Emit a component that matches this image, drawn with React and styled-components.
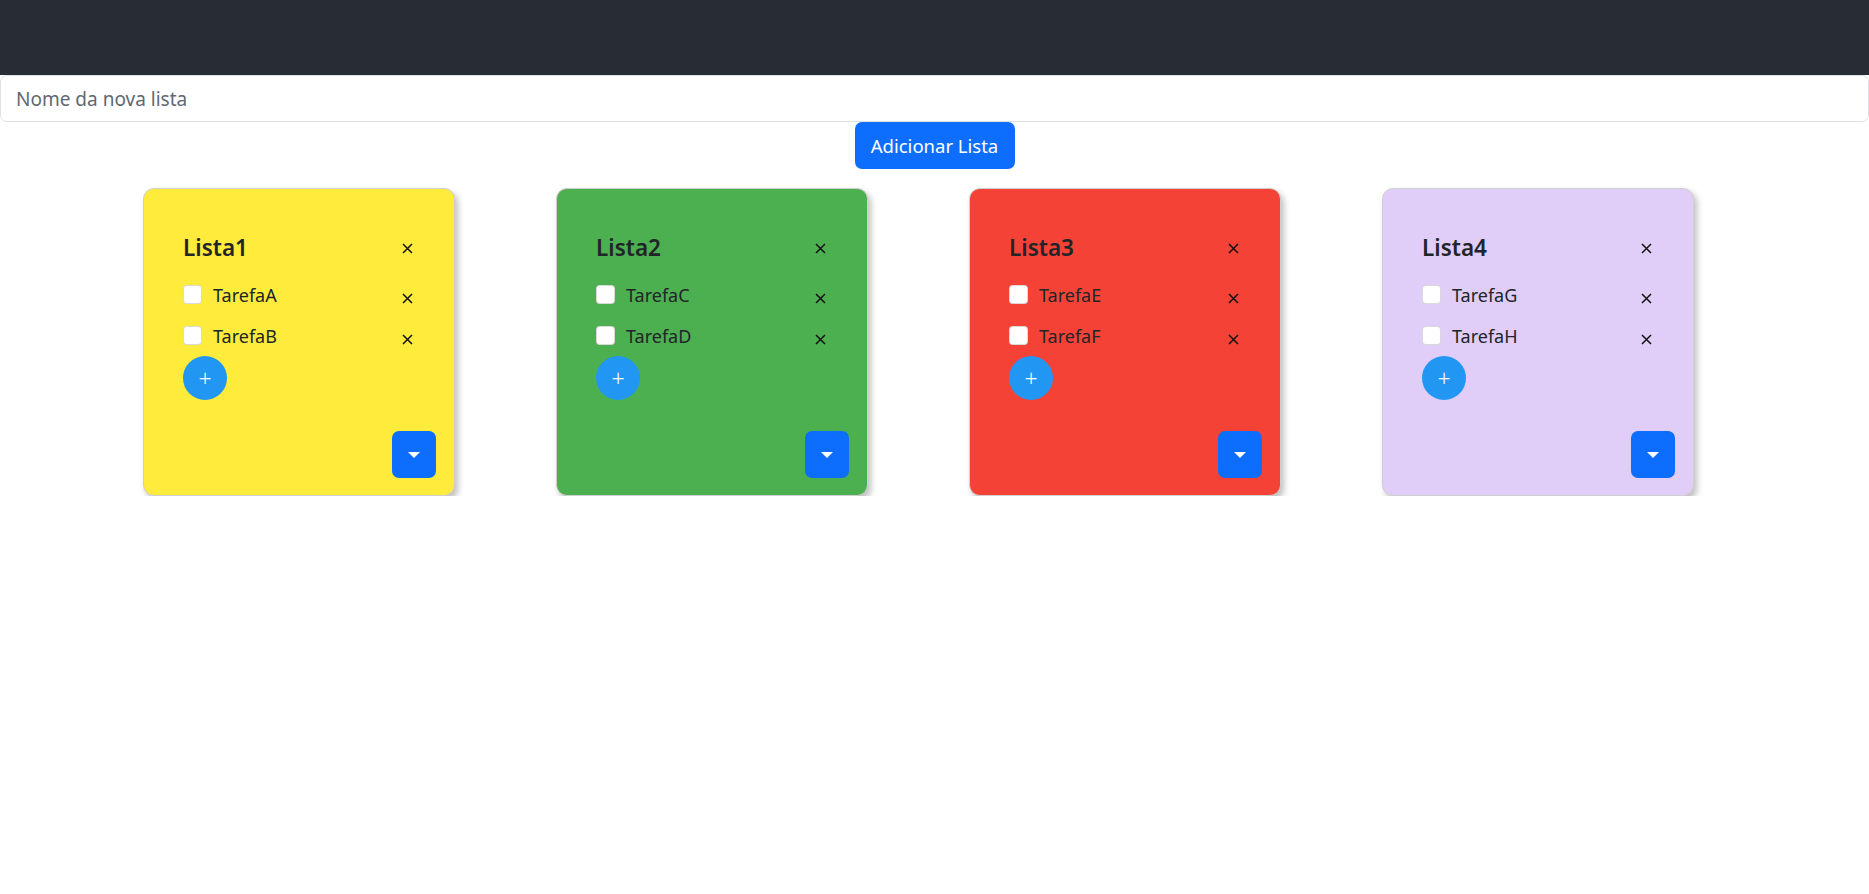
import React from 'react';
import styled, { createGlobalStyle } from 'styled-components';

const GlobalStyle = createGlobalStyle`
	* {
		box-sizing: border-box;
	}
	body {
		margin: 0;
		background: #ffffff;
		font-family: "Noto Sans", "Open Sans", sans-serif;
		color: #212529;
	}
`;

const Header = styled.header`
	height: 75px;
	background-color: #282c34;
`;

const NameInput = styled.input`
	display: block;
	width: 100%;
	height: 47px;
	padding: 0 15px;
	font-family: inherit;
	font-size: 19px;
	color: #212529;
	border: 1px solid #dee2e6;
	border-radius: 7px;
	outline: none;

	&::placeholder {
		color: #5f6871;
	}
`;

const AddRow = styled.div`
	display: flex;
	justify-content: center;
`;

const AddButton = styled.button`
	width: 160px;
	height: 47px;
	padding: 0;
	font-family: inherit;
	font-size: 18.5px;
	color: #fff;
	background-color: #0d6efd;
	border: none;
	border-radius: 7px;
`;

const Board = styled.div`
	display: flex;
	gap: 101px;
	padding: 19px 0 0 143px;
`;

const Card = styled.div`
	width: 312px;
	height: 308px;
	display: flex;
	flex-direction: column;
	padding: 40px 18px 17px 39px;
	background-color: ${p => p.$color};
	border: 1px solid #cfcfcf;
	border-radius: 11px;
	box-shadow: 3px 4px 6px rgba(0, 0, 0, 0.25);
`;

const Body = styled.div`
	padding-right: 22px;
`;

const TitleRow = styled.div`
	display: flex;
	align-items: center;
	justify-content: space-between;
	height: 36px;
	margin-bottom: 9px;
`;

const Title = styled.h4`
	margin: 0;
	font-size: 22.5px;
	font-weight: 600;
	color: #212529;
`;

const TaskRow = styled.div`
	display: flex;
	align-items: center;
	height: 41px;
`;

const Check = styled.input.attrs({ type: 'checkbox' })`
	appearance: none;
	width: 19px;
	height: 19px;
	margin: 0 11px 0 0;
	background: #fff;
	border: 1px solid rgba(0, 0, 0, 0.15);
	border-radius: 4px;
`;

const TaskName = styled.span`
	flex: 1;
	font-size: 18px;
	color: #212529;
`;

const CloseButton = styled.button`
	display: flex;
	align-items: center;
	justify-content: center;
	width: 14px;
	height: 14px;
	padding: 0;
	margin-top: ${p => (p.$low ? '8px' : '2px')};
	background: none;
	border: none;
`;

const PlusButton = styled.button`
	width: 44px;
	height: 44px;
	padding: 0;
	border: none;
	border-radius: 50%;
	background-color: #2196f3;
	color: #fff;
	font-family: inherit;
	font-size: 23px;
	font-weight: 300;
	line-height: 44px;
`;

const Footer = styled.div`
	margin-top: auto;
	display: flex;
	justify-content: flex-end;
`;

const DropButton = styled.button`
	width: 44px;
	height: 47px;
	display: flex;
	align-items: center;
	justify-content: center;
	background-color: #0d6efd;
	border: none;
	border-radius: 7px;

	&::after {
		content: "";
		border-top: 6px solid #fff;
		border-left: 6px solid transparent;
		border-right: 6px solid transparent;
	}
`;

const XIcon = () => (
	<svg width="11" height="11" viewBox="0 0 11 11">
		<path d="M1 1 L10 10 M10 1 L1 10" stroke="#111" strokeWidth="1.5" />
	</svg>
);

const lists = [
	{ name: 'Lista1', color: '#ffeb3b', tasks: ['TarefaA', 'TarefaB'] },
	{ name: 'Lista2', color: '#4caf50', tasks: ['TarefaC', 'TarefaD'] },
	{ name: 'Lista3', color: '#f44336', tasks: ['TarefaE', 'TarefaF'] },
	{ name: 'Lista4', color: '#e0cdf8', tasks: ['TarefaG', 'TarefaH'] },
];

const App = () => {
	return (
		<>
			<GlobalStyle />
			<Header />
			<NameInput placeholder="Nome da nova lista" />
			<AddRow>
				<AddButton>Adicionar Lista</AddButton>
			</AddRow>
			<Board>
				{lists.map(list => (
					<Card key={list.name} $color={list.color}>
						<Body>
							<TitleRow>
								<Title>{list.name}</Title>
								<CloseButton><XIcon /></CloseButton>
							</TitleRow>
							{list.tasks.map(task => (
								<TaskRow key={task}>
									<Check />
									<TaskName>{task}</TaskName>
									<CloseButton $low><XIcon /></CloseButton>
								</TaskRow>
							))}
							<PlusButton>+</PlusButton>
						</Body>
						<Footer>
							<DropButton />
						</Footer>
					</Card>
				))}
			</Board>
		</>
	);
};

export default App;
